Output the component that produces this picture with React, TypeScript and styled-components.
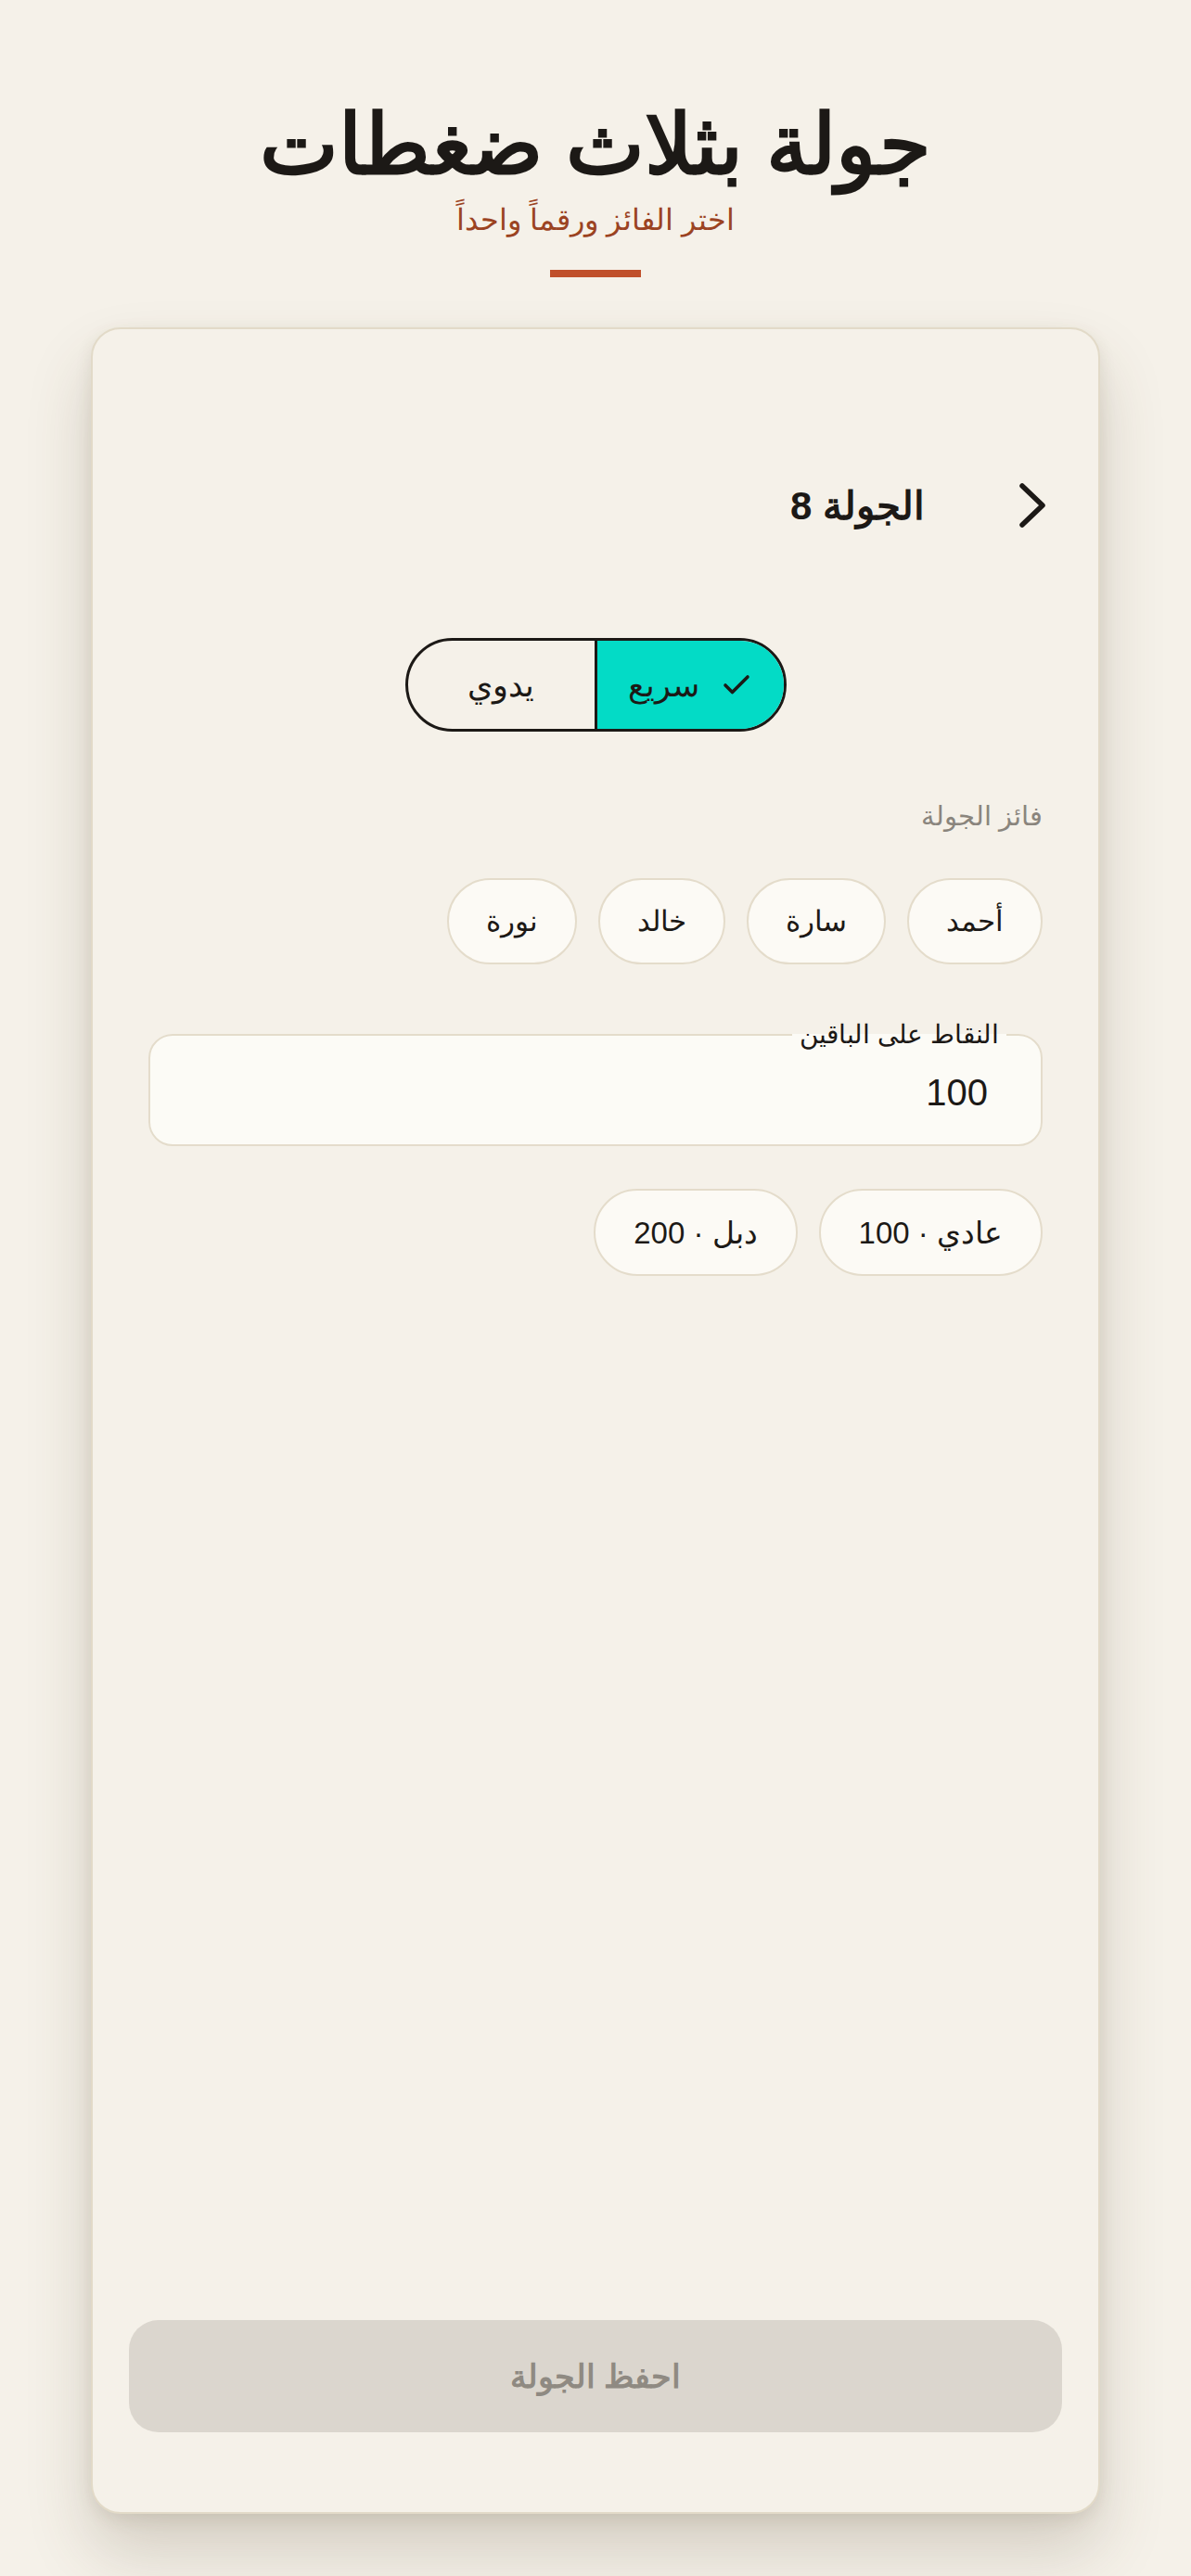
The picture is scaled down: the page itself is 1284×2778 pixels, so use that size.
import React, { useState } from 'react';
import styled, { createGlobalStyle } from 'styled-components';
import { Check } from 'lucide-react';

const GlobalStyle = createGlobalStyle`
  html, body {
    margin: 0;
    padding: 0;
    background: #f5f1e9;
  }
  body {
    font-family: 'Liberation Sans', 'Noto Sans', sans-serif;
    color: #1c1916;
  }
  * {
    box-sizing: border-box;
  }
`;

const Page = styled.div`
  min-height: 100vh;
  display: flex;
  flex-direction: column;
  align-items: center;
  padding: 101px 0 67px;
`;

const Title = styled.h1`
  margin: 0;
  font-size: 90px;
  line-height: 110px;
  font-weight: 700;
  color: #1c1916;
`;

const Subtitle = styled.p`
  margin: 6px 0 0;
  font-size: 32px;
  line-height: 40px;
  color: #9b4322;
`;

const Accent = styled.div`
  width: 98px;
  height: 8px;
  margin-top: 34px;
  background: #c0502b;
`;

const Card = styled.div`
  flex: 1;
  width: 1088px;
  margin-top: 54px;
  display: flex;
  flex-direction: column;
  padding: 160px 39px 86px;
  background: #f5f1e9;
  border: 2px solid #e2dac8;
  border-radius: 32px;
  box-shadow: 0 40px 70px rgba(80, 65, 40, 0.2), 0 6px 18px rgba(80, 65, 40, 0.1);
`;

const Content = styled.div`
  display: flex;
  flex-direction: column;
  padding: 0 21px;
`;

const Header = styled.div`
  display: flex;
  align-items: center;
  height: 60px;
`;

const BackButton = styled.button`
  display: flex;
  align-items: center;
  justify-content: center;
  width: 32px;
  height: 60px;
  padding: 0;
  margin-inline-start: -5px;
  margin-inline-end: 100px;
  border: none;
  background: none;
  color: #1c1916;
`;

const RoundTitle = styled.h2`
  margin: 0;
  font-size: 42px;
  font-weight: 700;
`;

const Toggle = styled.div`
  align-self: center;
  display: flex;
  width: 411px;
  height: 101px;
  margin-top: 113px;
  border: 3px solid #1c1916;
  border-radius: 51px;
  overflow: hidden;
`;

const ToggleOption = styled.button<{ $active?: boolean }>`
  flex: 1;
  display: flex;
  align-items: center;
  justify-content: center;
  gap: 22px;
  border: none;
  padding: 0;
  font-family: inherit;
  font-size: 35px;
  color: #1c1916;
  background: ${(p) => (p.$active ? '#03dbc6' : 'transparent')};
  & + & {
    border-inline-start: 3px solid #1c1916;
  }
`;

const FieldLabel = styled.div`
  margin-top: 73px;
  font-size: 29px;
  line-height: 36px;
  color: #8a857d;
`;

const ChipRow = styled.div<{ $top: number }>`
  display: flex;
  flex-wrap: wrap;
  gap: 23px;
  margin-top: ${(p) => p.$top}px;
`;

const Chip = styled.button<{ $wide?: boolean }>`
  height: ${(p) => (p.$wide ? 94 : 93)}px;
  padding: 0 ${(p) => (p.$wide ? 41 : 40)}px;
  border: 2px solid #e4dccb;
  border-radius: 47px;
  background: #fcfaf5;
  font-family: inherit;
  font-size: ${(p) => (p.$wide ? 33 : 31)}px;
  color: #1c1916;
`;

const Field = styled.fieldset`
  margin: 62px 0 0;
  padding: 24px 57px 32px;
  border: 2px solid #e4dccb;
  border-radius: 26px;
  background: #fcfbf6;
`;

const Legend = styled.legend`
  margin-inline-start: -20px;
  padding: 0 8px;
  font-size: 28px;
  line-height: 28px;
  color: #1c1916;
`;

const ValueInput = styled.input`
  display: block;
  width: 100%;
  height: 48px;
  padding: 0;
  border: none;
  background: none;
  outline: none;
  font-family: inherit;
  font-size: 40px;
  color: #1c1916;
  text-align: right;
`;

const SaveButton = styled.button`
  margin-top: auto;
  height: 121px;
  border: none;
  border-radius: 32px;
  background: #dbd6ce;
  font-family: inherit;
  font-size: 35px;
  font-weight: 700;
  color: #8f8a82;
`;

const Chevron = () => (
  <svg width="32" height="50" viewBox="0 0 32 50" fill="none" stroke="currentColor" strokeWidth="5.5" strokeLinecap="round" strokeLinejoin="round">
    <polyline points="5,4 27,25 5,46" />
  </svg>
);

const players = ['أحمد', 'سارة', 'خالد', 'نورة'];
const presets = [
  { label: 'عادي', value: 100 },
  { label: 'دبل', value: 200 },
];

export default function App() {
  const [mode, setMode] = useState<'fast' | 'manual'>('fast');
  const [points, setPoints] = useState('100');

  return (
    <>
      <GlobalStyle />
      <Page dir="rtl">
        <Title>جولة بثلاث ضغطات</Title>
        <Subtitle>اختر الفائز ورقماً واحداً</Subtitle>
        <Accent />
        <Card>
          <Content>
            <Header>
              <BackButton aria-label="رجوع">
                <Chevron />
              </BackButton>
              <RoundTitle>الجولة 8</RoundTitle>
            </Header>

            <Toggle>
              <ToggleOption $active={mode === 'fast'} onClick={() => setMode('fast')}>
                {mode === 'fast' && <Check size={36} strokeWidth={2.4} />}
                سريع
              </ToggleOption>
              <ToggleOption $active={mode === 'manual'} onClick={() => setMode('manual')}>
                {mode === 'manual' && <Check size={36} strokeWidth={2.4} />}
                يدوي
              </ToggleOption>
            </Toggle>

            <FieldLabel>فائز الجولة</FieldLabel>
            <ChipRow $top={49}>
              {players.map((name) => (
                <Chip key={name}>{name}</Chip>
              ))}
            </ChipRow>

            <Field>
              <Legend>النقاط على الباقين</Legend>
              <ValueInput value={points} onChange={(e) => setPoints(e.target.value)} inputMode="numeric" />
            </Field>

            <ChipRow $top={46}>
              {presets.map((p) => (
                <Chip key={p.label} $wide onClick={() => setPoints(String(p.value))}>
                  {p.label} · {p.value}
                </Chip>
              ))}
            </ChipRow>
          </Content>
          <SaveButton disabled>احفظ الجولة</SaveButton>
        </Card>
      </Page>
    </>
  );
}
